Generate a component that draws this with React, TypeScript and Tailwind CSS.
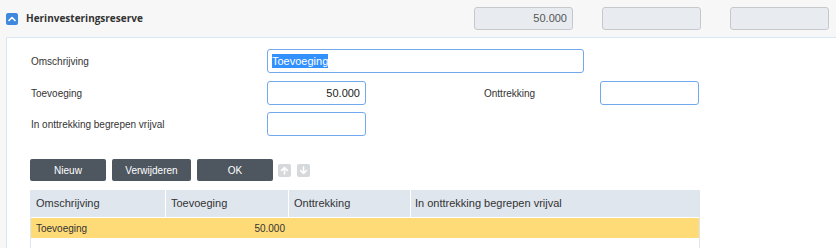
import React from "react";

const F = { fontFamily: '"Liberation Sans", Arial, sans-serif' };

function Arrow({ up }: { up?: boolean }) {
  return (
    <div className="w-[13px] h-[13px] rounded-[2px] bg-[#d6d9dc] flex items-center justify-center">
      <svg width="9" height="9" viewBox="0 0 9 9" className={up ? "" : "rotate-180"}>
        <path d="M4.5 8V1.5M1.5 4.5L4.5 1.5L7.5 4.5" stroke="#fff" strokeWidth="1.6" fill="none" strokeLinecap="round" strokeLinejoin="round" />
      </svg>
    </div>
  );
}

export default function App() {
  return (
    <div className="w-[836px] h-[248px] overflow-hidden bg-[#f7f7f7] text-[#333]" style={F}>
      <div className="h-[37px] flex items-center pl-[6px] pr-[7px]">
        <div className="w-[12px] h-[12px] rounded-[2px] bg-[#3f88dd] flex items-center justify-center">
          <svg width="8" height="6" viewBox="0 0 8 6">
            <path d="M1 4.5L4 1.5L7 4.5" stroke="#fff" strokeWidth="1.6" fill="none" strokeLinecap="round" strokeLinejoin="round" />
          </svg>
        </div>
        <div className="ml-[8px] text-[10px] font-bold text-[#333]" style={{ fontFamily: '"Open Sans", "Liberation Sans", sans-serif' }}>
          Herinvesteringsreserve
        </div>
        <div className="ml-auto flex gap-[29px]">
          <div className="w-[99px] h-[23px] rounded-[3px] border border-[#c6c9cc] bg-[#e8ecf0] flex items-center justify-end pr-[5px] text-[11px] text-[#555]">50.000</div>
          <div className="w-[99px] h-[23px] rounded-[3px] border border-[#c6c9cc] bg-[#e8ecf0]"></div>
          <div className="w-[99px] h-[23px] rounded-[3px] border border-[#c6c9cc] bg-[#e8ecf0]"></div>
        </div>
      </div>
      <div className="ml-[6px] h-[211px] border-l border-t border-[#d9e7f4] bg-white pl-[23px] pt-[11px]">
        <div className="flex flex-col">
          <div className="flex items-center h-[24px]">
            <div className="w-[237px] text-[10px] pl-[1px]">Omschrijving</div>
            <div className="w-[317px] h-[24px] rounded-[3px] border border-[#72a9ee] flex items-center pl-[4px]">
              <span className="bg-[#3390ff] text-white text-[11px] leading-[14px]">Toevoeging</span>
            </div>
          </div>
          <div className="flex items-center h-[24px] mt-[8px]">
            <div className="w-[237px] text-[10px] pl-[1px]">Toevoeging</div>
            <div className="w-[99px] h-[24px] rounded-[3px] border border-[#72a9ee] flex items-center justify-end pr-[5px] text-[11px] text-[#222]">50.000</div>
            <div className="w-[118px]"></div>
            <div className="w-[116px] text-[10px]">Onttrekking</div>
            <div className="w-[99px] h-[24px] rounded-[3px] border border-[#72a9ee]"></div>
          </div>
          <div className="flex items-center h-[24px] mt-[7px]">
            <div className="w-[237px] text-[10px] pl-[1px]">In onttrekking begrepen vrijval</div>
            <div className="w-[99px] h-[24px] rounded-[3px] border border-[#72a9ee]"></div>
          </div>
        </div>
        <div className="flex items-center mt-[23px] h-[22px]">
          <button className="w-[76px] h-[22px] rounded-[2px] bg-[#4e5760] text-white text-[10px]">Nieuw</button>
          <button className="ml-[6px] w-[79px] h-[22px] rounded-[2px] bg-[#4e5760] text-white text-[10px]">Verwijderen</button>
          <button className="ml-[6px] w-[76px] h-[22px] rounded-[2px] bg-[#4e5760] text-white text-[10px]">OK</button>
          <div className="ml-[5px]"><Arrow up /></div>
          <div className="ml-[6px]"><Arrow /></div>
        </div>
        <div className="mt-[9px] w-[670px] h-[60px] border-l border-r border-[#dde5ee]">
          <div className="flex h-[27px] bg-[#dfe6ee] text-[11px] text-[#333]">
            <div className="w-[135px] flex items-center pl-[5px] border-r border-white">Omschrijving</div>
            <div className="w-[123px] flex items-center pl-[5px] border-r border-white">Toevoeging</div>
            <div className="w-[122px] flex items-center pl-[5px] border-r border-white">Onttrekking</div>
            <div className="flex-1 flex items-center pl-[4px]">In onttrekking begrepen vrijval</div>
          </div>
          <div className="h-[1px] bg-white"></div>
          <div className="flex h-[20px] bg-[#ffdb78] text-[10px] text-[#333]">
            <div className="w-[135px] flex items-center pl-[5px]">Toevoeging</div>
            <div className="w-[123px] flex items-center justify-end pr-[4px]">50.000</div>
            <div className="flex-1"></div>
          </div>
        </div>
      </div>
    </div>
  );
}
